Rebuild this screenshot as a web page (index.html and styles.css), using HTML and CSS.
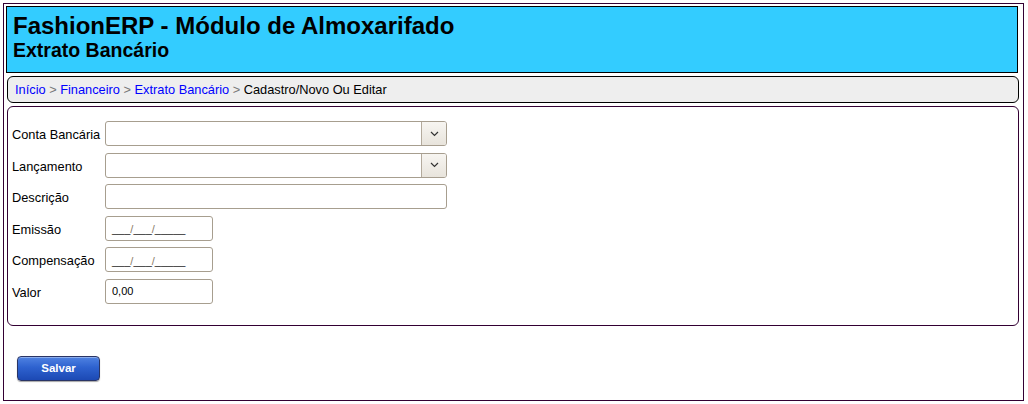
FILE: index.html
```html
<!DOCTYPE html>
<html lang="pt-BR">
<head>
<meta charset="utf-8">
<title>FashionERP - Extrato Bancário</title>
<link rel="stylesheet" href="styles.css">
</head>
<body>
<div class="page">
  <header class="header">
    <h1 class="title">FashionERP - Módulo de Almoxarifado</h1>
    <h2 class="subtitle">Extrato Bancário</h2>
  </header>
  <nav class="crumbs">
    <a href="#">Início</a><span class="sep"> &gt; </span><a href="#">Financeiro</a><span class="sep"> &gt; </span><a href="#">Extrato Bancário</a><span class="sep"> &gt; </span><span class="current">Cadastro/Novo Ou Editar</span>
  </nav>
  <form class="form">
    <label class="lbl">Conta Bancária</label>
    <div class="select wide"><span class="sel-val"></span><span class="sel-btn"><svg width="9" height="6" viewBox="0 0 9 6"><path d="M1 1 L4.5 4.5 L8 1" fill="none" stroke="#333" stroke-width="1.2"/></svg></span></div>
    <label class="lbl">Lançamento</label>
    <div class="select wide"><span class="sel-val"></span><span class="sel-btn"><svg width="9" height="6" viewBox="0 0 9 6"><path d="M1 1 L4.5 4.5 L8 1" fill="none" stroke="#333" stroke-width="1.2"/></svg></span></div>
    <label class="lbl">Descrição</label>
    <input class="field wide" type="text">
    <label class="lbl">Emissão</label>
    <div class="field short mask">___<i>/</i>___<i>/</i>_____</div>
    <label class="lbl">Compensação</label>
    <div class="field short mask">___<i>/</i>___<i>/</i>_____</div>
    <label class="lbl">Valor</label>
    <input class="field short" type="text" value="0,00">
  </form>
  <div class="actions">
    <button class="btn" type="button">Salvar</button>
  </div>
</div>
</body>
</html>
```

FILE: styles.css
```css
* { box-sizing: border-box; }
body {
  margin: 0;
  background: #fff;
  font-family: "Liberation Sans", Arial, sans-serif;
  color: #000;
}
.page {
  margin: 3px;
  width: 1021px;
  height: 398px;
  border: 1px solid #330033;
  padding: 2px 0 0 2px;
  display: flex;
  flex-direction: column;
  align-items: flex-start;
}
.header {
  width: 1012px;
  background: #33ccff;
  border: 1px solid #000;
  padding: 5px 6px 10px;
}
.title {
  margin: 0;
  font-size: 24px;
  line-height: 27px;
  font-weight: bold;
}
.subtitle {
  margin: 0;
  font-size: 19.5px;
  line-height: 23px;
  font-weight: bold;
}
.crumbs {
  margin: 3px 0 0 1px;
  width: 1012px;
  height: 27px;
  background: #eeeeee;
  border: 1px solid #000;
  border-radius: 6px;
  padding: 5px 7px;
  font-size: 12.8px;
  line-height: 15px;
}
.crumbs a { color: #0000ff; text-decoration: none; }
.crumbs .sep { color: #777; }
.crumbs .current { color: #000; }
.form {
  margin: 3px 0 0 1px;
  width: 1012px;
  border: 1px solid #330033;
  border-radius: 6px;
  padding: 14px 3px 21px 4px;
  display: grid;
  grid-template-columns: 93px 1fr;
  grid-auto-rows: 25px;
  row-gap: 6.6px;
  align-items: center;
}
.lbl {
  font-size: 12.8px;
  line-height: 15px;
  padding-top: 2px;
}
.field, .select {
  height: 25px;
  border: 1px solid #a79e8f;
  border-radius: 3px;
  background: #fff;
  font-family: "Liberation Sans", Arial, sans-serif;
  font-size: 11px;
  padding: 0 6px;
  margin: 0;
  outline: none;
}
.wide { width: 342px; }
.short { width: 108px; }
.select {
  display: flex;
  padding: 0;
  overflow: hidden;
}
.sel-val { flex: 1; }
.sel-btn {
  width: 25px;
  border-left: 1px solid #b3aa9c;
  background: linear-gradient(#f7f5f1, #e8e4dc);
  display: flex;
  align-items: center;
  justify-content: center;
}
.mask {
  display: flex;
  align-items: center;
  padding-top: 2px;
  color: #222;
}
.mask i {
  font-style: normal;
  color: #8a7a66;
}
.actions {
  margin: 30px 0 0 11px;
}
.btn {
  width: 83px;
  height: 25px;
  border: 1px solid #2a3565;
  border-radius: 4px;
  background: linear-gradient(#4f82e2 0%, #2e62cf 45%, #1c49b4 100%);
  color: #fff;
  font-family: "Liberation Sans", Arial, sans-serif;
  font-weight: bold;
  font-size: 11.5px;
  padding: 0;
  box-shadow: 0 1px 1px rgba(0,0,0,0.35), inset 0 1px 0 rgba(255,255,255,0.35);
}
```
